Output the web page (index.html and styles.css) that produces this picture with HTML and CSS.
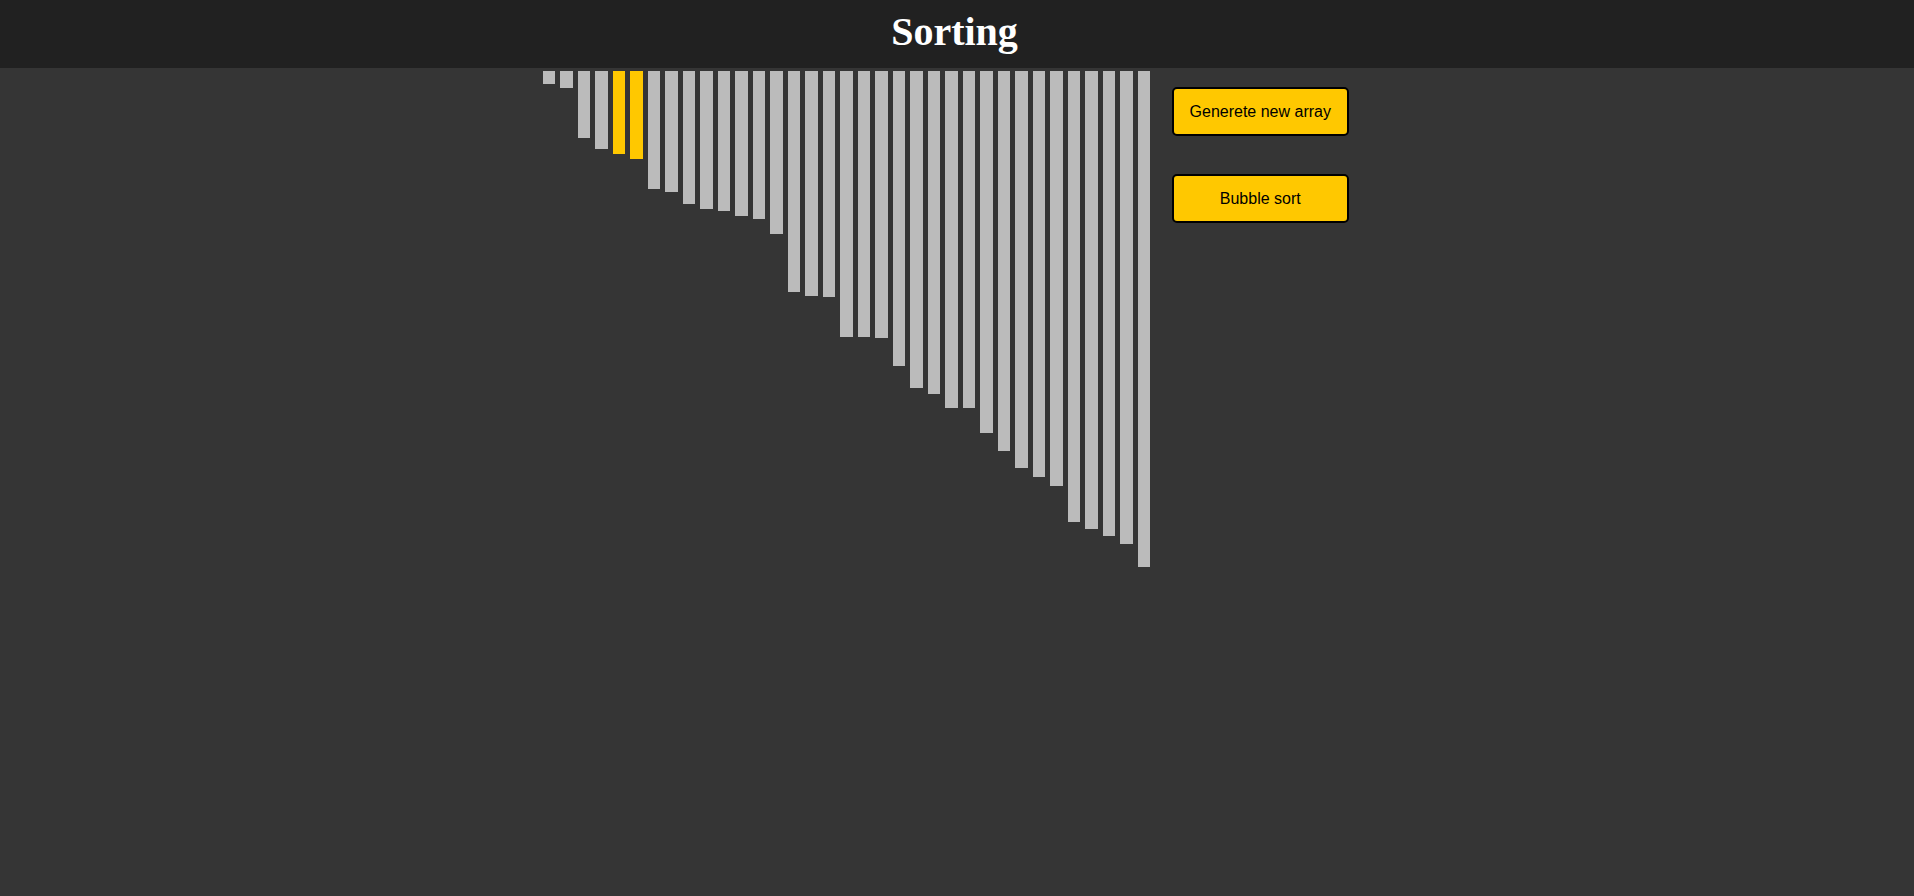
FILE: index.html
```html
<!DOCTYPE html>
<html>
<head>
<meta charset="utf-8">
<title>Sorting</title>
<link rel="stylesheet" href="styles.css">
</head>
<body>
<header class="header"><h1 class="title">Sorting</h1></header>
<main class="main">
  <div class="bars">
    <div class="bar" style="height:13px"></div>
    <div class="bar" style="height:17px"></div>
    <div class="bar" style="height:67px"></div>
    <div class="bar" style="height:78px"></div>
    <div class="bar active" style="height:83px"></div>
    <div class="bar active" style="height:88px"></div>
    <div class="bar" style="height:118px"></div>
    <div class="bar" style="height:121px"></div>
    <div class="bar" style="height:133px"></div>
    <div class="bar" style="height:138px"></div>
    <div class="bar" style="height:140px"></div>
    <div class="bar" style="height:145px"></div>
    <div class="bar" style="height:148px"></div>
    <div class="bar" style="height:163px"></div>
    <div class="bar" style="height:221px"></div>
    <div class="bar" style="height:225px"></div>
    <div class="bar" style="height:226px"></div>
    <div class="bar" style="height:266px"></div>
    <div class="bar" style="height:266px"></div>
    <div class="bar" style="height:267px"></div>
    <div class="bar" style="height:295px"></div>
    <div class="bar" style="height:317px"></div>
    <div class="bar" style="height:323px"></div>
    <div class="bar" style="height:337px"></div>
    <div class="bar" style="height:337px"></div>
    <div class="bar" style="height:362px"></div>
    <div class="bar" style="height:380px"></div>
    <div class="bar" style="height:397px"></div>
    <div class="bar" style="height:406px"></div>
    <div class="bar" style="height:415px"></div>
    <div class="bar" style="height:451px"></div>
    <div class="bar" style="height:458px"></div>
    <div class="bar" style="height:465px"></div>
    <div class="bar" style="height:473px"></div>
    <div class="bar" style="height:496px"></div>
  </div>
  <div class="controls">
    <button class="btn">Generete new array</button>
    <button class="btn">Bubble sort</button>
  </div>
</main>
</body>
</html>
```
FILE: styles.css
```css
html, body {
  margin: 0;
  padding: 0;
  height: 100%;
}
body {
  background: #353535;
  overflow: hidden;
}
.header {
  background: #212121;
  height: 68px;
  box-sizing: border-box;
  padding: 0 5px 4px 0;
  text-align: center;
}
.title {
  margin: 0;
  font-family: "Liberation Serif", "Times New Roman", serif;
  font-weight: bold;
  font-size: 40px;
  line-height: 64px;
  color: #ffffff;
}
.main {
  display: flex;
  justify-content: center;
  align-items: flex-start;
}
.bars {
  display: flex;
  align-items: flex-start;
  margin-top: 3px;
}
.bar {
  width: 12.5px;
  margin: 0 2.5px;
  background: #bbbbbb;
}
.bar.active {
  background: #ffc800;
}
.controls {
  display: flex;
  flex-direction: column;
  gap: 38px;
  margin: 19px 25px 0 19px;
}
.btn {
  width: 177px;
  height: 49px;
  box-sizing: border-box;
  background: #ffc800;
  border: 2px solid #000;
  border-radius: 5px;
  font-family: "Liberation Sans", Arial, sans-serif;
  font-size: 16px;
  color: #000;
  padding: 0;
  cursor: pointer;
}
```
